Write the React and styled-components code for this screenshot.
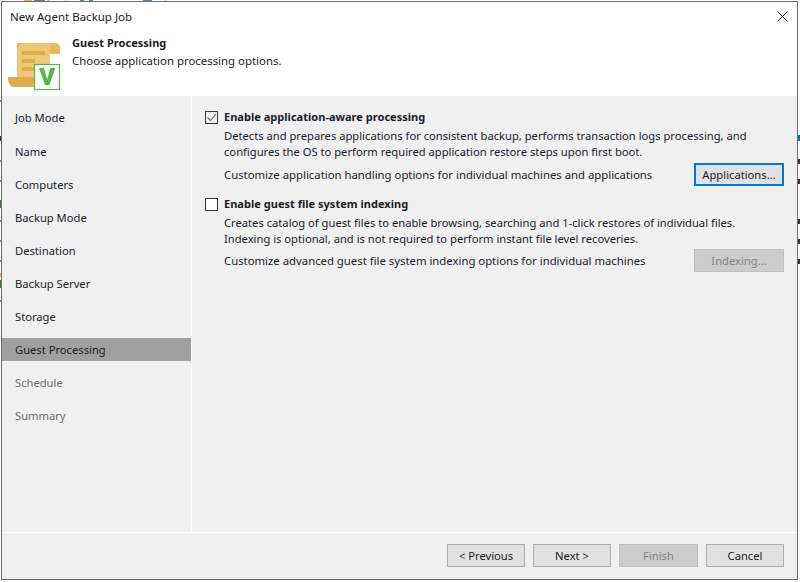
import React from "react";
import styled, { createGlobalStyle } from "styled-components";

const Global = createGlobalStyle`
  html, body { margin: 0; padding: 0; background: #fff; }
  #root { width: 800px; height: 582px; overflow: hidden; position: relative; }
`;

const Desktop = styled.div`
  position: relative;
  width: 800px;
  height: 582px;
  padding: 1px 0 0 1px;
  box-sizing: border-box;
  background: #fff;
  font-family: "Noto Sans", "Open Sans", sans-serif;
  font-size: 11.2px;
  color: #1a1a2a;
`;

const Mark = styled.i.attrs((p) => ({
  style: { left: p.$x, top: p.$y, width: p.$w, height: p.$h, background: p.$c },
}))`
  position: absolute;
  display: block;
`;

const Window = styled.div`
  position: relative;
  width: 797px;
  height: 579px;
  box-sizing: border-box;
  border: 1px solid #6c6c6c;
  background: #fff;
  display: flex;
  flex-direction: column;
`;

const TitleBar = styled.div`
  height: 30px;
  flex: none;
  display: flex;
  align-items: center;
  justify-content: space-between;
  padding: 0 9px 1px 8px;
  box-sizing: border-box;
  font-size: 11.5px;
`;

const CloseIcon = styled.svg`
  width: 11px;
  height: 11px;
  display: block;
  margin-top: -1px;
`;

const Header = styled.div`
  height: 64px;
  flex: none;
  display: flex;
  background: #fff;
`;

const LogoWrap = styled.div`
  width: 70px;
  flex: none;
  padding: 10px 0 0 6px;
  box-sizing: border-box;
`;

const LogoSvg = styled.svg`
  display: block;
  width: 54px;
  height: 50px;
`;

const HeaderText = styled.div`
  padding-top: 3px;
  display: flex;
  flex-direction: column;
`;

const HeaderTitle = styled.div`
  font-weight: 700;
  line-height: 16px;
  font-size: 11.05px;
`;

const HeaderSub = styled.div`
  line-height: 20px;
  font-size: 11.4px;
`;

const Main = styled.div`
  flex: 1;
  display: flex;
  min-height: 0;
  background: #f0f0f0;
`;

const Sidebar = styled.nav`
  width: 189px;
  flex: none;
  padding-top: 10px;
  box-sizing: border-box;
  display: flex;
  flex-direction: column;
  gap: 10px;
`;

const NavItem = styled.div`
  height: 23px;
  flex: none;
  display: flex;
  align-items: center;
  padding-left: 13px;
  margin-bottom: ${(p) => (p.$first ? "1px" : "0")};
  color: ${(p) => (p.$muted ? "#6d6d6d" : "#1a1a2a")};
  background: ${(p) => (p.$active ? "#a0a0a0" : "transparent")};
`;

const Divider = styled.div`
  width: 1px;
  flex: none;
  background: #fff;
`;

const Content = styled.div`
  flex: 1;
  padding: 13px 13px 0 13px;
  box-sizing: border-box;
  display: flex;
  flex-direction: column;
`;

const Section = styled.section`
  display: grid;
  grid-template-columns: 19px 1fr;
  margin-bottom: 10px;
`;

const Check = styled.span`
  width: 13px;
  height: 13px;
  box-sizing: border-box;
  margin-top: 2px;
  border: 1px solid #333;
  background: ${(p) => (p.$on ? "#f0f0f0" : "#fff")};
  display: block;
`;

const CheckMark = styled.svg`
  width: 11px;
  height: 11px;
  display: block;
`;

const OptionTitle = styled.div`
  font-weight: 700;
  font-size: 11.05px;
  line-height: 16px;
`;

const Description = styled.div`
  grid-column: 2;
  margin-top: 3px;
  line-height: ${(p) => p.$lh}px;
`;

const OptionRow = styled.div`
  grid-column: 2;
  margin-top: 3px;
  display: flex;
  align-items: center;
  justify-content: space-between;
`;

const RowLabel = styled.span`
  font-size: 11.33px;
`;

const Button = styled.button`
  width: ${(p) => p.$w || 78}px;
  height: 23px;
  box-sizing: border-box;
  padding: 0;
  font: inherit;
  color: ${(p) => (p.disabled ? "#838383" : "#1a1a2a")};
  background: ${(p) => (p.disabled ? "#cccccc" : "#e1e1e1")};
  border: ${(p) =>
    p.$focus ? "2px solid #0078d7" : p.disabled ? "1px solid #bfbfbf" : "1px solid #adadad"};
`;

const Footer = styled.div`
  height: 47px;
  flex: none;
  box-sizing: border-box;
  border-top: 1px solid #fff;
  background: #f0f0f0;
  display: flex;
  justify-content: flex-end;
  align-items: flex-start;
  padding: 11px 13px 0 0;
  gap: 8px;
`;

const marks = [
  [24, 0, 8, 1, "#e8b45a"], [34, 0, 11, 1, "#777"], [47, 0, 3, 1, "#e8b45a"],
  [65, 0, 1, 1, "#ccc"], [80, 0, 4, 1, "#3a8fc8"], [89, 0, 4, 1, "#3a8fc8"],
  [143, 0, 9, 1, "#3a8fc8"], [165, 0, 1, 1, "#ccc"],
  [798, 135, 2, 6, "#0078d7"], [798, 159, 2, 5, "#333"], [798, 179, 2, 5, "#333"],
  [798, 219, 2, 5, "#333"], [798, 239, 2, 5, "#333"], [798, 259, 2, 5, "#333"],
  [0, 100, 1, 2, "#888"], [0, 136, 1, 5, "#333"], [0, 160, 1, 2, "#888"],
  [0, 180, 1, 2, "#888"], [0, 200, 1, 8, "#2c8a2c"], [0, 220, 1, 2, "#888"],
  [0, 240, 1, 2, "#888"], [0, 260, 1, 2, "#888"], [0, 273, 1, 4, "#e8b45a"],
  [0, 280, 1, 8, "#2c8a2c"], [0, 300, 1, 2, "#888"],
];

const nav = [
  "Job Mode", "Name", "Computers", "Backup Mode", "Destination",
  "Backup Server", "Storage", "Guest Processing", "Schedule", "Summary",
];

const Logo = () => (
  <LogoSvg viewBox="0 0 54 50">
    <path d="M9 1h38a5 5 0 0 1 5 5v5h-10v30H9z" fill="#f0c873" />
    <path d="M42 1h5a5 5 0 0 1 5 5v6h-10c1-4 1-8 0-11z" fill="#e4bb60" />
    <path d="M13 1c-3 0-4 2-4 5v29H0c0 6 2 10 6 10h22V35H9V6z" fill="#dcae4b" />
    <path d="M14 9h23v4H14zM14 17h13v4H14zM14 25h12v4H14z" fill="#dcae4b" />
    <rect x="26.5" y="22.5" width="25" height="25" fill="#fff" stroke="#56b84c" strokeWidth="1.2" />
    <path d="M31 26h5l3.2 11.5L42.4 26h5l-6 17h-4.4z" fill="#56b84c" />
  </LogoSvg>
);

export default function App() {
  return (
    <Desktop>
      <Global />
      {marks.map(([x, y, w, h, c], i) => (
        <Mark key={i} $x={x} $y={y} $w={w} $h={h} $c={c} />
      ))}
      <Window>
        <TitleBar>
          <span>New Agent Backup Job</span>
          <CloseIcon viewBox="0 0 11 11">
            <path d="M.5.5l10 10M10.5.5l-10 10" stroke="#111" strokeWidth="1" fill="none" />
          </CloseIcon>
        </TitleBar>
        <Header>
          <LogoWrap>
            <Logo />
          </LogoWrap>
          <HeaderText>
            <HeaderTitle>Guest Processing</HeaderTitle>
            <HeaderSub>Choose application processing options.</HeaderSub>
          </HeaderText>
        </Header>
        <Main>
          <Sidebar>
            {nav.map((n, i) => (
              <NavItem key={n} $first={i === 0} $active={i === 7} $muted={i > 7}>
                {n}
              </NavItem>
            ))}
          </Sidebar>
          <Divider />
          <Content>
            <Section>
              <Check $on>
                <CheckMark viewBox="0 0 11 11">
                  <path d="M1.5 5.5l3 3 5.5-6.5" stroke="#6a6a6a" strokeWidth="1.1" fill="none" />
                </CheckMark>
              </Check>
              <OptionTitle>Enable application-aware processing</OptionTitle>
              <Description $lh={16}>
                Detects and prepares applications for consistent backup, performs transaction logs processing, and
                <br />
                configures the OS to perform required application restore steps upon first boot.
              </Description>
              <OptionRow>
                <RowLabel>Customize application handling options for individual machines and applications</RowLabel>
                <Button $w={90} $focus>Applications...</Button>
              </OptionRow>
            </Section>
            <Section>
              <Check />
              <OptionTitle>Enable guest file system indexing</OptionTitle>
              <Description $lh={15.5}>
                Creates catalog of guest files to enable browsing, searching and 1-click restores of individual files.
                <br />
                Indexing is optional, and is not required to perform instant file level recoveries.
              </Description>
              <OptionRow>
                <RowLabel>Customize advanced guest file system indexing options for individual machines</RowLabel>
                <Button $w={90} disabled>Indexing...</Button>
              </OptionRow>
            </Section>
          </Content>
        </Main>
        <Footer>
          <Button>&lt; Previous</Button>
          <Button>Next &gt;</Button>
          <Button disabled $w={79}>Finish</Button>
          <Button>Cancel</Button>
        </Footer>
      </Window>
    </Desktop>
  );
}
